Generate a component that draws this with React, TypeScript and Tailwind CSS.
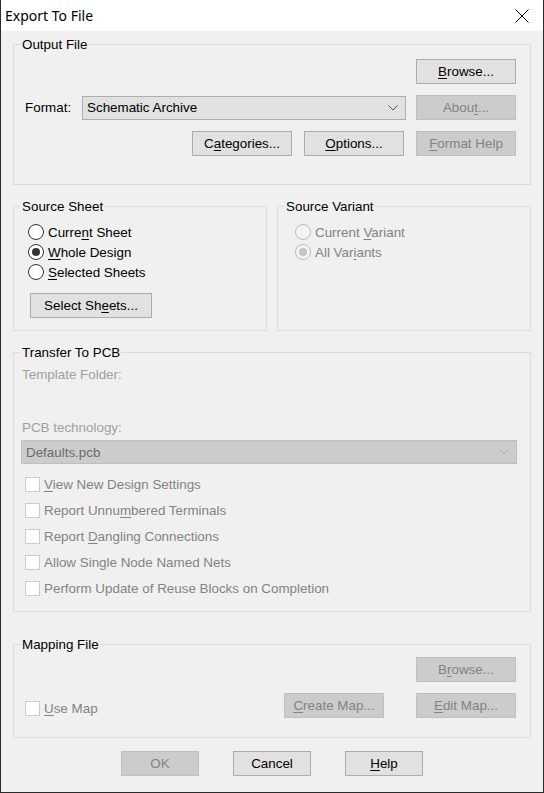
import React from 'react'

type Kids = { children?: React.ReactNode }

const Btn = (props: { children: React.ReactNode, disabled?: boolean, className?: string }) => {
	const {children, disabled, className} = props
	return (
		<div
			className={`h-[25px] flex items-center justify-center border text-[13.4px] leading-[15px] ${disabled ? "bg-[#cccccc] border-[#bfbfbf] text-[#838383]" : "bg-[#e1e1e1] border-[#adadad] text-black"} ${className ?? ""}`}
		>
			{children}
		</div>
	)
}

const Group = (props: { label: string, className?: string } & Kids) => {
	const {label, className, children} = props
	return (
		<div className={`relative border border-[#dcdcdc] ${className ?? ""}`}>
			<div className="absolute left-[7px] top-[-8px] px-[1px] bg-[#f0f0f0] text-[13.4px] leading-[15px] text-black">
				{label}
			</div>
			{children}
		</div>
	)
}

const Radio = (props: { checked?: boolean, disabled?: boolean } & Kids) => {
	const {checked, disabled, children} = props
	return (
		<div className="flex items-center h-[20px]">
			<div
				className={`w-[16px] h-[16px] rounded-full border flex items-center justify-center ${disabled ? "border-[#bcbcbc] bg-[#f4f4f4]" : "border-[#333333] bg-white"}`}
			>
				{checked && <div className={`w-[8px] h-[8px] rounded-full ${disabled ? "bg-[#c4c4c4]" : "bg-[#333333]"}`}/>}
			</div>
			<span className={`ml-[4px] text-[13.4px] leading-[15px] ${disabled ? "text-[#838383]" : "text-black"}`}>{children}</span>
		</div>
	)
}

const Check = (props: Kids) => (
	<div className="flex items-center h-[26px]">
		<div className="w-[15px] h-[15px] border border-[#cccccc] bg-white"/>
		<span className="ml-[4px] text-[13.4px] leading-[15px] text-[#838383]">{props.children}</span>
	</div>
)

const U = (props: Kids) => <span className="underline underline-offset-[2px]">{props.children}</span>

const Chevron = (props: { color: string }) => (
	<svg width="10" height="6" viewBox="0 0 10 6" fill="none">
		<path d="M0.5 0.5 L5 5 L9.5 0.5" stroke={props.color} strokeWidth="1"/>
	</svg>
)

export default function App() {
	return (
		<div className="w-[544px] h-[793px] flex flex-col border-x border-b border-[#2b2b2b] bg-[#f0f0f0] font-['Liberation_Sans',Arial,sans-serif] text-black">
			{/* title bar */}
			<div className="h-[31px] bg-white flex items-center justify-between pl-[4px] pr-[14px]">
				<span className="text-[14px] leading-[18px] font-['Noto_Sans',sans-serif]">Export To File</span>
				<svg width="14" height="14" viewBox="0 0 14 14">
					<path d="M0.5 0.5 L13.5 13.5 M13.5 0.5 L0.5 13.5" stroke="#000" strokeWidth="1"/>
				</svg>
			</div>

			<div className="flex flex-col px-[12px] pt-[13px]">
				<Group label="Output File" className="h-[141px] pt-[14px] pr-[14px] pl-[11px]">
					<div className="flex justify-end">
						<Btn className="w-[100px]"><U>B</U>rowse...</Btn>
					</div>
					<div className="flex items-center mt-[11px]">
						<span className="w-[57px] text-[13.4px] leading-[15px]">Format:</span>
						<div className="w-[324px] h-[24px] bg-[#e1e1e1] border border-[#adadad] flex items-center justify-between pl-[4px] pr-[7px]">
							<span className="text-[13.4px] leading-[15px]">Schematic Archive</span>
							<Chevron color="#555555"/>
						</div>
						<div className="flex-1"/>
						<Btn disabled className="w-[100px]">Abou<U>t</U>...</Btn>
					</div>
					<div className="flex justify-end gap-[12px] mt-[11px]">
						<Btn className="w-[100px]">C<U>a</U>tegories...</Btn>
						<Btn className="w-[100px]"><U>O</U>ptions...</Btn>
						<Btn disabled className="w-[100px]"><U>F</U>ormat Help</Btn>
					</div>
				</Group>

				<div className="flex gap-[10px] mt-[21px]">
					<Group label="Source Sheet" className="w-[254px] h-[125px] pt-[15px] pl-[14px]">
						<Radio>Curre<U>n</U>t Sheet</Radio>
						<Radio checked><U>W</U>hole Design</Radio>
						<Radio><U>S</U>elected Sheets</Radio>
						<Btn className="w-[122px] ml-[2px] mt-[11px]">Select Sh<U>e</U>ets...</Btn>
					</Group>
					<Group label="Source Variant" className="w-[254px] h-[125px] pt-[15px] pl-[17px]">
						<Radio disabled>Current <U>V</U>ariant</Radio>
						<Radio disabled checked>All Var<U>i</U>ants</Radio>
					</Group>
				</div>

				<Group label="Transfer To PCB" className="h-[260px] mt-[21px] pl-[7px] pr-[13px]">
					<div className="mt-[14px] ml-[1px] text-[13.4px] leading-[15px] text-[#a0a0a0]">Template Folder:</div>
					<div className="mt-[38px] ml-[1px] text-[13.4px] leading-[15px] text-[#a0a0a0]">PCB technology:</div>
					<div className="mt-[5px] h-[24px] bg-[#cccccc] border border-[#bfbfbf] flex items-center justify-between pl-[4px] pr-[7px]">
						<span className="text-[13.4px] leading-[15px] text-[#6d6d6d]">Defaults.pcb</span>
						<Chevron color="#a8a8a8"/>
					</div>
					<div className="mt-[7px] pl-[4px]">
						<Check><U>V</U>iew New Design Settings</Check>
						<Check>Report Unnu<U>m</U>bered Terminals</Check>
						<Check>Report <U>D</U>angling Connections</Check>
						<Check>Allow Sin<U>g</U>le Node Named Nets</Check>
						<Check>Perform Update of Reuse Blocks on Completion</Check>
					</div>
				</Group>

				<Group label="Mapping File" className="h-[94px] mt-[32px] pt-[12px] pr-[14px] pl-[11px]">
					<div className="flex justify-end">
						<Btn disabled className="w-[100px]">B<U>r</U>owse...</Btn>
					</div>
					<div className="flex items-start mt-[11px]">
						<div className="mt-[2px]">
							<Check><U>U</U>se Map</Check>
						</div>
						<div className="flex-1"/>
						<Btn disabled className="w-[100px]"><U>C</U>reate Map...</Btn>
						<Btn disabled className="w-[100px] ml-[32px]"><U>E</U>dit Map...</Btn>
					</div>
				</Group>

				<div className="flex justify-center gap-[34px] mt-[13px]">
					<Btn disabled className="w-[78px]">OK</Btn>
					<Btn className="w-[78px]">Cancel</Btn>
					<Btn className="w-[78px]"><U>H</U>elp</Btn>
				</div>
			</div>
		</div>
	)
}
